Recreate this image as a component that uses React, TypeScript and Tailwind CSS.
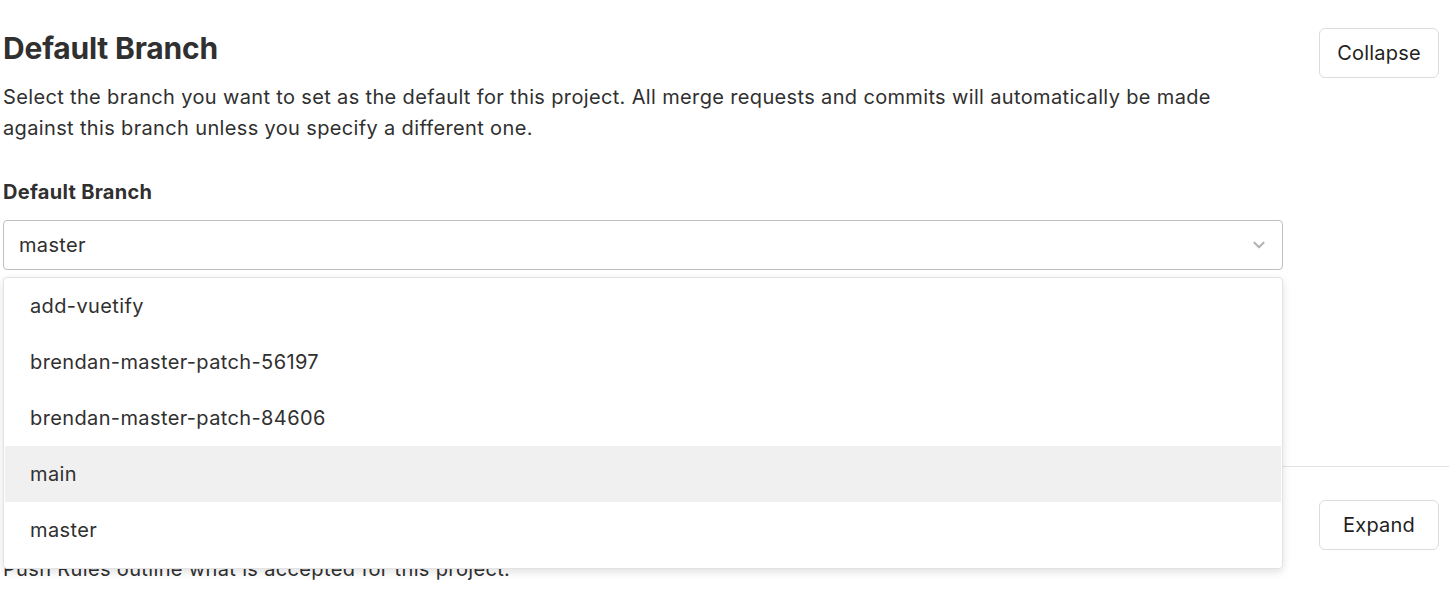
import { ChevronDown } from 'lucide-react';

const branches = [
  'add-vuetify',
  'brendan-master-patch-56197',
  'brendan-master-patch-84606',
  'main',
  'master',
];

function SectionButton({ label }: { label: string }) {
  return (
    <button className="mr-[10px] h-[50px] w-[120px] shrink-0 rounded-[6px] border border-[#dcdcdc] bg-white text-[20px] tracking-[0.2px] text-[#1f1f1f]">
      {label}
    </button>
  );
}

export default function App() {
  return (
    <div
      className="min-h-[607px] bg-white pl-[3px] pr-[7px] text-[#333]"
      style={{ fontFamily: 'Inter, "Noto Sans", sans-serif' }}
    >
      {/* Default branch section */}
      <section className="pt-[28px] pb-[196px]">
        <div className="flex items-start justify-between">
          <div className="w-[1280px]">
            <h2 className="text-[30px] font-bold leading-[40px] tracking-[-0.2px] text-[#303030]">
              Default Branch
            </h2>
            <p className="mt-[14px] text-[20px] leading-[31px] tracking-[0.35px] text-[#303030]">
              Select the branch you want to set as the default for this project. All merge requests and commits will automatically be made
              <br />
              against this branch unless you specify a different one.
            </p>
          </div>
          <SectionButton label="Collapse" />
        </div>

        <div className="mt-[35px] w-[1280px]">
          <label className="block text-[20px] font-bold leading-[26px] tracking-[0.3px] text-[#303030]">
            Default Branch
          </label>
          <div className="relative mt-[15px]">
            <div className="flex h-[50px] items-center justify-between rounded-[4px] border border-[#bfbfbf] bg-white pl-[15px] pr-[14px]">
              <span className="text-[20px] tracking-[0.35px] text-[#303030]">master</span>
              <ChevronDown className="h-[18px] w-[18px] text-[#b5b5b5]" strokeWidth={3} />
            </div>

            <ul className="absolute left-0 right-0 top-[57px] z-10 rounded-[4px] border border-[#e3e3e3] bg-white px-px pb-[10px] shadow-[0_3px_8px_rgba(0,0,0,0.12)]">
              {branches.map((b) => (
                <li
                  key={b}
                  className={`flex h-[56px] items-center pl-[25px] text-[20px] tracking-[0.38px] text-[#303030] ${
                    b === 'main' ? 'bg-[#f0f0f0]' : ''
                  }`}
                >
                  {b}
                </li>
              ))}
            </ul>
          </div>
        </div>
      </section>

      {/* Push rules section */}
      <section className="border-t border-[#e3e3e3] pt-[33px] pb-[30px]">
        <div className="flex items-start justify-between">
          <div className="w-[1280px]">
            <h2 className="text-[30px] font-bold leading-[40px] text-[#303030]">Push Rules</h2>
            <p className="mt-[14px] text-[20px] leading-[31px] tracking-[0.35px] text-[#303030]">
              Push Rules outline what is accepted for this project.
            </p>
          </div>
          <SectionButton label="Expand" />
        </div>
      </section>
    </div>
  );
}
